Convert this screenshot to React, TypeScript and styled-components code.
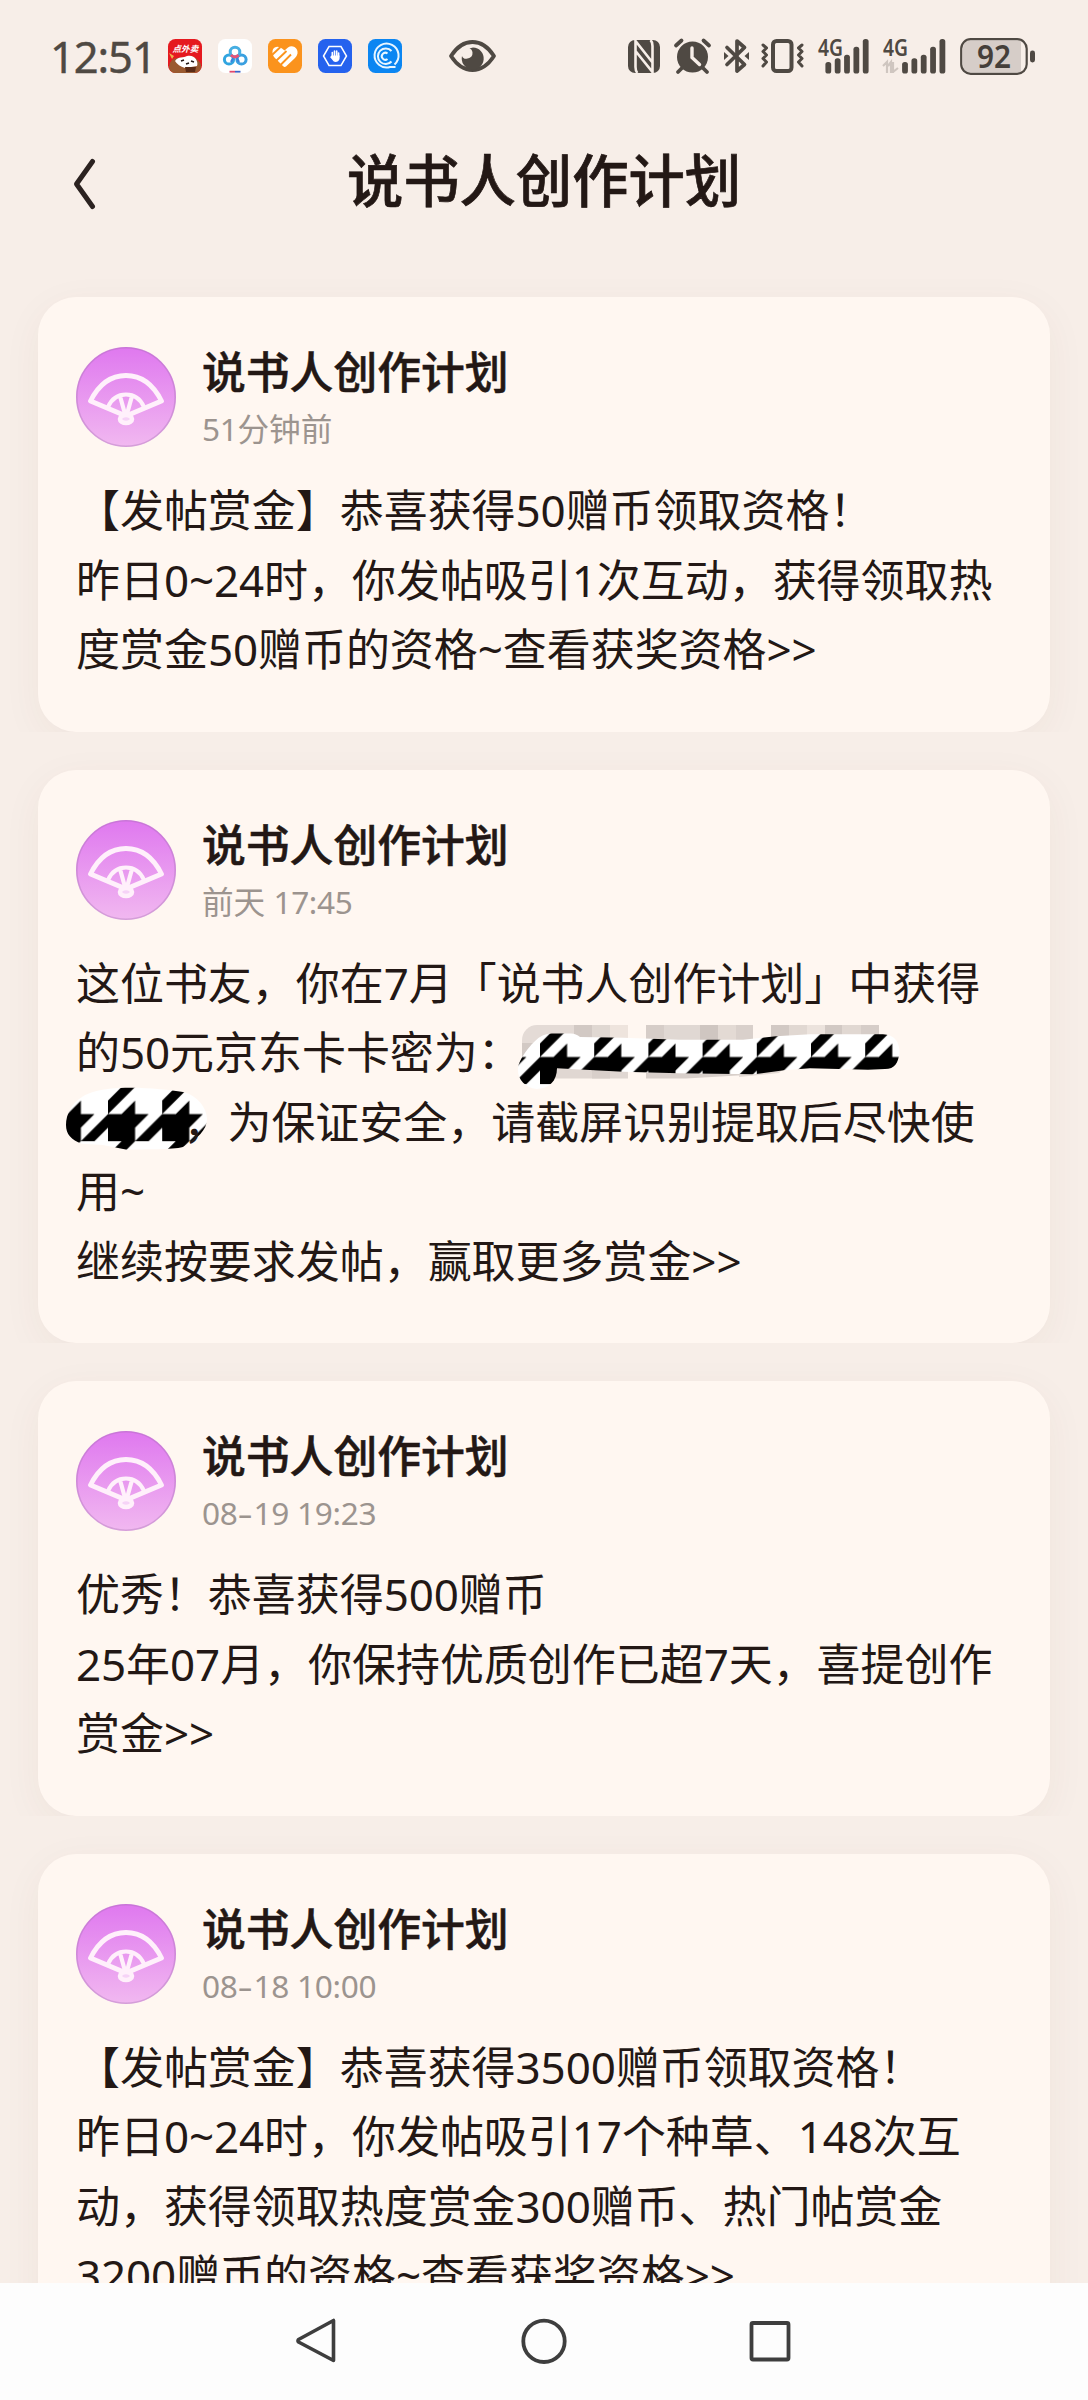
import React from "react";
import styled, { createGlobalStyle } from "styled-components";

const Global = createGlobalStyle`
  * { box-sizing: border-box; }
  body { margin: 0; background: #f7eee8; }
`;

const INK = "#4f4943";

const Screen = styled.div`
  width: 1088px;
  height: 2400px;
  display: flex;
  flex-direction: column;
  overflow: hidden;
  background: #f7eee8;
  color: #231815;
  font-family: "Noto Sans", "Noto Sans CJK SC", sans-serif;
`;

const StatusBar = styled.header`
  height: 112px;
  flex: none;
  display: flex;
  align-items: center;
  padding: 0 53px 0 50px;
`;

const Clock = styled.span`
  width: 118px;
  color: ${INK};
  font: 400 43.5px/50px "Noto Sans", sans-serif;
  letter-spacing: -1.1px;
  white-space: nowrap;
  -webkit-text-stroke: 0.4px ${INK};
`;

const AppIcons = styled.div`
  display: flex;
  gap: 16px;
  width: 281px;
`;

const SystemIcons = styled.div`
  display: flex;
  align-items: center;
  margin-left: auto;
`;

const Glyph = styled.svg<{ $gap?: number }>`
  display: block;
  flex: none;
  overflow: visible;
  margin-left: ${(p) => p.$gap ?? 0}px;
`;

const TitleBar = styled.div`
  height: 147px;
  flex: none;
  display: grid;
  grid-template-columns: 120px 1fr 120px;
  align-items: start;
`;

const BackButton = styled.button`
  border: 0;
  background: none;
  padding: 46px 0 0 72px;
`;

const PageTitle = styled.h1`
  margin: 0;
  padding-top: 25.5px;
  text-align: center;
  font-size: 56.3px;
  line-height: 84px;
  font-weight: 500;
  -webkit-text-stroke: 0.7px #231815;
`;

const Feed = styled.main`
  height: 2024px;
  flex: none;
  overflow: hidden;
`;

const FeedItem = styled.div`
  padding: 38px 38px 0;
  overflow: hidden;
`;

const Card = styled.article`
  isolation: isolate;
  padding: 50px 38px 47px;
  border-radius: 38px;
  background: #fff7f1;
  box-shadow: 0 10px 40px rgba(90, 50, 40, 0.05);
`;

const CardHead = styled.div`
  display: flex;
  gap: 26px;
  height: 100px;
`;

const Author = styled.div`
  display: flex;
  flex-direction: column;
`;

const Name = styled.div`
  margin-top: -1px;
  font-size: 43.8px;
  line-height: 52px;
  font-weight: 500;
  -webkit-text-stroke: 0.5px #231815;
`;

const Time = styled.div`
  margin-top: 7px;
  font-size: 31.6px;
  line-height: 48px;
  color: #9c948f;
`;

const Body = styled.div`
  margin-top: 29px;
  font-size: 43.96px;
  line-height: 69.5px;
`;

const Line = styled.div`
  white-space: nowrap;
`;

const Latin = styled.span<{ $track: number }>`
  letter-spacing: ${(p) => p.$track}px;
`;

const Dash = styled.span`
  display: inline-block;
  margin: 0 2.9px;
  transform: scaleX(1.5);
`;

const Redacted = styled.span<{ $width: number }>`
  position: relative;
  display: inline-block;
  width: ${(p) => p.$width}px;
  height: 30px;
`;

const Scribble = styled.svg<{ $left: number; $top: number }>`
  position: absolute;
  z-index: -1;
  left: ${(p) => p.$left}px;
  top: ${(p) => p.$top}px;
  overflow: visible;
`;

const NavBar = styled.nav`
  height: 117px;
  flex: none;
  display: flex;
  justify-content: center;
  align-items: flex-start;
  gap: 180px;
  padding: 34px 0 0;
  background: #fdfdfd;
`;

function Text({ children, track = -0.1 }: { children: string; track?: number }) {
  return (
    <>
      {children.split(/([0-9~>:]+|-)/).map((part, i) => {
        if (part === "-") return <Dash key={i}>-</Dash>;
        return i % 2 ? <Latin key={i} $track={track}>{part}</Latin> : part;
      })}
    </>
  );
}

function Avatar() {
  return (
    <Glyph width="100" height="100" viewBox="0 0 100 100">
      <defs>
        <linearGradient id="avatarFill" x1="0" y1="0" x2="0" y2="1">
          <stop offset="0" stopColor="#df78ef" />
          <stop offset="1" stopColor="#f1b8f0" />
        </linearGradient>
      </defs>
      <circle cx="50" cy="50" r="50" fill="url(#avatarFill)" />
      <circle cx="50" cy="50" r="49.2" fill="none" stroke="#a06fb0" strokeOpacity=".35" strokeWidth="1.6" />
      <g fill="none" stroke="#fff0fb" strokeWidth="4.8" strokeLinejoin="round">
        <path d="M14.5 54C23 37 35 28.500 50 28.500S77 37 85.500 54L50 69Z" />
        <path d="M32 60C36 51 42 47.500 50 47.500S64 51 68 60M44 49L49 67M56 49L51 67" strokeWidth="4.2" />
        <ellipse cx="50" cy="72" rx="6" ry="4" fill="#f6d3f7" strokeWidth="4.6" />
      </g>
    </Glyph>
  );
}

function HoundsPattern({ id, x, y }: { id: string; x: number; y: number }) {
  return (
    <pattern id={id} x={x} y={y} width="54.2" height="54.2" patternUnits="userSpaceOnUse" viewBox="0 0 4 4">
      <rect width="4" height="4" fill="#fff" />
      <path d="M0 1L1 0H2L0 2ZM2 1V2H1ZM0 2H2V4H0ZM2 2H3L2 3ZM4 2V3L3 4H2Z" fill="#000" />
    </pattern>
  );
}

const mosaic: [number, number, string][] = [
  [523, 52, "#e4dbd6"], [575, 18, "#d2c9c4"], [593, 18, "#e0d8d2"], [611, 18, "#eee4dd"],
  [647, 18, "#d6cdc8"], [665, 36, "#e0d8d3"], [701, 18, "#cfc6c1"], [719, 18, "#e3dad4"],
  [737, 17, "#d9d0cb"], [772, 18, "#d2c9c4"], [790, 18, "#e1d8d2"], [808, 18, "#ece3dd"],
  [826, 17, "#d2c9c4"], [843, 19, "#e1d8d2"], [862, 18, "#d6cdc8"],
];

function CodeScribble() {
  return (
    <Redacted $width={390}>
      <Scribble $left={-9} $top={-18.5} width="390" height="70" viewBox="514 1020 390 70">
        <defs>
          <HoundsPattern id="houndsA" x={541} y={1028.9} />
          <clipPath id="mosaicClip"><rect x="523" y="1024" width="380" height="54" rx="15" /></clipPath>
        </defs>
        <g clipPath="url(#mosaicClip)">
          {mosaic.map(([x, w, c]) => <rect key={x} x={x} y="1024" width={w} height="24" fill={c} />)}
          <path d="M523 1042h22v22h-22z" fill="#d2c9c4" />
          <path d="M556 1060h73v17.500h-73z" fill="#e0d7d2" />
          <path d="M593 1060h18v17.500h-18z" fill="#d8cfca" />
          <path d="M647 1060h110l-10 14-60 3.500h-40z" fill="#d8cfca" />
          <path d="M740 1060h52l-12 12-40 4z" fill="#e3dad4" />
        </g>
        <path
          fill="url(#houndsA)"
          d="M519 1067C520 1058 533 1041 541 1036Q546 1032.500 553 1032.500H572Q577 1032.500 581 1036L624 1036.700 680 1038.700H744L777 1035.300 811 1033.300H884Q900.500 1034 900.500 1052C899 1062 896 1068 886 1068L869 1068.700 811 1067.300 785 1069.300 755 1073.300 680 1072.300 624 1070.700 558 1067.300C558 1080 550 1088 537.500 1088C526 1087 518 1078 519 1067Z"
        />
      </Scribble>
    </Redacted>
  );
}

function TailScribble() {
  return (
    <Redacted $width={107.5}>
      <Scribble $left={-12} $top={-23} width="145" height="66" viewBox="64 1084 145 66">
        <defs>
          <HoundsPattern id="houndsB" x={108} y={1085} />
        </defs>
        <path
          fill="url(#houndsB)"
          d="M66 1123C66 1112 72 1101 82 1095Q94 1087 120 1086C145 1085 168 1088 183 1090C197 1093 207 1106 207 1117C207 1128 197 1137 183 1145C172 1148 145 1147 127 1147.700L103 1143 82 1141.700C71 1138 66 1132 66 1123Z"
        />
      </Scribble>
    </Redacted>
  );
}

function Message({ time, children }: { time: string; children: React.ReactNode }) {
  return (
    <FeedItem>
      <Card>
        <CardHead>
          <Avatar />
          <Author>
            <Name>说书人创作计划</Name>
            <Time><Text track={-0.35}>{time}</Text></Time>
          </Author>
        </CardHead>
        <Body>{children}</Body>
      </Card>
    </FeedItem>
  );
}

function Lines({ items }: { items: string[] }) {
  return <>{items.map((t) => <Line key={t}><Text>{t}</Text></Line>)}</>;
}

function AppTile({ children, fill }: { children: React.ReactNode; fill: string }) {
  return (
    <Glyph width="34" height="34" viewBox="0 0 34 34">
      <rect width="34" height="34" rx="7.500" fill={fill} />
      {children}
    </Glyph>
  );
}

function NotificationApps() {
  return (
    <AppIcons>
      <AppTile fill="#e5191f">
        <path d="M1 28Q2 19 10 19L24 17Q33 22 33 27Q33 34 26 34H8Q2 34 1 28Z" fill="#9a5a30" />
        <path d="M7 22C10 17 16 19 19 17C26 15 31 22 29 27L17 29Q10 27 7 22Z" fill="#fff" />
        <path d="M17 28h11l-1 5h-9z" fill="#5a2b16" />
        <path d="M1 14l5 3-2 3z" fill="#efb14a" />
        <path d="M13 22l3-1M23 22l3 1M18 25l3-1" stroke="#231815" strokeWidth="1.600" />
        <text x="4.500" y="12.800" fontSize="8.600" fontWeight="700" fill="#fff" fontStyle="italic" fontFamily="Noto Sans CJK SC, sans-serif">点外卖</text>
      </AppTile>
      <AppTile fill="#fff">
        <g fill="none" strokeWidth="3">
          <circle cx="11" cy="20.500" r="4.600" stroke="#31a5e0" />
          <circle cx="23.500" cy="20.500" r="4.600" stroke="#3aa0e0" />
          <circle cx="17" cy="13" r="4.800" stroke="#46aee2" />
          <path d="M13 16Q17 20 20.500 16" stroke="#ea5277" />
          <path d="M15 19l-2 4M19 19l2 4" stroke="#3a83dc" strokeWidth="2" />
        </g>
        <path d="M11.500 32.700h5.500" stroke="#e0486c" strokeWidth="1.800" />
        <path d="M17 32.700h5.500" stroke="#3a62c8" strokeWidth="1.800" />
      </AppTile>
      <AppTile fill="#fb931d">
        <path d="M4.500 14Q4 9 8 8Q11 7 14 9.500L16.500 11.500L20 8.500Q23 6.500 26.500 8Q30 10 29.500 14.500Q29 17 27 19L18 27.500Q16.500 28.500 15 27L6 18Q4.800 16.500 4.500 14Z" fill="#fff" />
        <path d="M4 16L12.500 8M8.500 21.500L18.500 12M12.500 26L23 15.500" stroke="#fb931d" strokeWidth="1.900" />
      </AppTile>
      <AppTile fill="#2562ee">
        <path d="M11 7.500h12l5.500 9.500-5.500 9.500H11L5.500 17z" fill="none" stroke="#fff" strokeWidth="1.500" />
        <path d="M14.300 18v-4.500M16.500 17v-5M18.700 17v-5M20.600 18v-4" stroke="#fff" strokeWidth="1.600" strokeLinecap="round" />
        <path d="M13.500 16.500h8V20q-1 3-4 3-2 0-3-2l-2.500-3 1-.7z" fill="#fff" />
      </AppTile>
      <AppTile fill="#0b86f2">
        <g fill="none" stroke="#e9f6ff" strokeWidth="2">
          <path d="M26.500 25.500A12 12 0 1 0 22 28L27.500 28" />
          <path d="M23.500 12A7.800 7.800 0 1 0 23.500 22.500" />
          <path d="M19.500 14.500A3.500 3.500 0 1 0 19.500 20" />
        </g>
      </AppTile>
    </AppIcons>
  );
}

function Signal({ data }: { data?: boolean }) {
  const x0 = data ? 22 : 10.3;
  const tops = [23, 19.300, 15.700, 7.700, 0];
  return (
    <Glyph $gap={14} width={data ? 63 : 51} height="34" viewBox={data ? "0 0 63 34" : "0 0 51 34"}>
      <text x="0" y="16.500" fontFamily="Noto Sans, sans-serif" fontWeight="600" fontSize="22.500" textLength="25" lengthAdjust="spacingAndGlyphs" fill={INK}>4G</text>
      {tops.map((t, i) => (
        <rect key={i} x={x0 - 2.900 + i * 9.350} y={t} width="5.800" height={34.500 - t} rx="2.600" fill={INK} />
      ))}
      {data && <path d="M0 27l4-4v11M5 27l3-4v11M10 34V23M10 33l5-4M10 24v6" fill="none" stroke="#cfc6c0" strokeWidth="2.200" />}
    </Glyph>
  );
}

function SystemTray() {
  return (
    <SystemIcons>
      <Glyph width="32" height="33" viewBox="0 0 32 33">
        <rect width="32" height="33" rx="7" fill={INK} />
        <path d="M9.300 33Q7.500 31 7.500 27V1L24.500 22.500M7.500 11L24.500 32V6Q24.500 2 22.500 0" fill="none" stroke="#f7eee8" strokeWidth="2.600" />
      </Glyph>
      <Glyph $gap={14} width="37" height="34" viewBox="0 0 37 34">
        <circle cx="18.500" cy="18" r="15.500" fill={INK} />
        <path d="M2 6.500L7.500 1.500M35 6.500L29.500 1.500M8 29l-4 4M29 29l4 4" stroke={INK} strokeWidth="3.800" strokeLinecap="round" />
        <path d="M18 9v9.500l7.500 7" fill="none" stroke="#f7eee8" strokeWidth="3.400" strokeLinecap="round" />
      </Glyph>
      <Glyph $gap={13} width="25" height="34" viewBox="0 0 25 34">
        <path d="M3 8.500L20.500 25.500L13 32V2l7.500 6.500L3 25.500" fill="none" stroke={INK} strokeWidth="3.700" strokeLinecap="round" strokeLinejoin="round" />
        <path d="M0 13v8l4.500-4zM25 13v8l-4.500-4z" fill={INK} />
      </Glyph>
      <Glyph $gap={12} width="43" height="34" viewBox="0 0 43 34">
        <rect x="12" y="2" width="18.500" height="30" rx="3.500" fill="none" stroke={INK} strokeWidth="4" />
        <path d="M2 6l3.500 3-3.500 3.500 3.500 3.500-3.500 3.500 3.500 3.500-3.500 4M41 6l-3.500 3 3.500 3.500-3.500 3.500 3.500 3.500-3.500 3.500 3.500 4" fill="none" stroke={INK} strokeWidth="3" strokeLinejoin="round" strokeLinecap="round" />
      </Glyph>
      <Signal />
      <Signal data />
      <Glyph $gap={14} width="75" height="37" viewBox="0 0 75 37">
        <path d="M11 2.500H61V34.500H11Q3 34.500 3 26.500V10.500Q3 2.500 11 2.500Z" fill="#d6cdc8" />
        <rect x="1.200" y="1.200" width="65.500" height="34.600" rx="9.500" fill="none" stroke={INK} strokeWidth="2.200" />
        <rect x="70" y="12.500" width="5" height="12" rx="2.400" fill={INK} />
        <text x="17" y="30.300" textLength="34" lengthAdjust="spacingAndGlyphs" fontFamily="Noto Sans, sans-serif" fontWeight="600" fontSize="32.500" fill="#453f3a">92</text>
      </Glyph>
    </SystemIcons>
  );
}

export default function App() {
  return (
    <Screen>
      <Global />
      <StatusBar>
        <Clock>12:51</Clock>
        <NotificationApps />
        <Glyph width="47" height="32" viewBox="0 0 47 32">
          <path d="M2 16Q11 2 23.500 2T45 16Q36 30 23.500 30T2 16Z" fill="none" stroke={INK} strokeWidth="3.800" strokeLinejoin="round" />
          <path d="M24 7.500A11 11 0 1 1 13 16Q14 19 17.500 18.800Q24 18 23.500 12.500Q23 9 20.500 8.500Z" fill={INK} />
        </Glyph>
        <SystemTray />
      </StatusBar>
      <TitleBar>
        <BackButton aria-label="返回">
          <Glyph width="24" height="52" viewBox="0 0 24 52">
            <path d="M20.500 3.500L4.500 26l16 22.500" fill="none" stroke="#2b2220" strokeWidth="5" strokeLinecap="round" strokeLinejoin="round" />
          </Glyph>
        </BackButton>
        <PageTitle>说书人创作计划</PageTitle>
      </TitleBar>
      <Feed>
        <Message time="51分钟前">
          <Lines items={["【发帖赏金】恭喜获得50赠币领取资格！", "昨日0~24时，你发帖吸引1次互动，获得领取热", "度赏金50赠币的资格~查看获奖资格>>"]} />
        </Message>
        <Message time="前天 17:45">
          <Lines items={["这位书友，你在7月「说书人创作计划」中获得"]} />
          <Line><Text>的50元京东卡卡密为：</Text><CodeScribble /></Line>
          <Line><TailScribble />，为保证安全，请截屏识别提取后尽快使</Line>
          <Lines items={["用~", "继续按要求发帖，赢取更多赏金>>"]} />
        </Message>
        <Message time="08-19 19:23">
          <Lines items={["优秀！恭喜获得500赠币", "25年07月，你保持优质创作已超7天，喜提创作", "赏金>>"]} />
        </Message>
        <Message time="08-18 10:00">
          <Lines items={["【发帖赏金】恭喜获得3500赠币领取资格！", "昨日0~24时，你发帖吸引17个种草、148次互", "动，获得领取热度赏金300赠币、热门帖赏金", "3200赠币的资格~查看获奖资格>>"]} />
        </Message>
      </Feed>
      <NavBar>
        <Glyph width="46" height="48" viewBox="0 0 46 48">
          <path d="M38.500 3.500V43.500L3.500 25Q2.500 24 3.500 22.500Z" fill="none" stroke="#3e3e3e" strokeWidth="3.600" strokeLinejoin="round" />
        </Glyph>
        <Glyph width="46" height="48" viewBox="0 0 46 48">
          <circle cx="23" cy="24.300" r="20.700" fill="none" stroke="#3e3e3e" strokeWidth="3.800" />
        </Glyph>
        <Glyph width="46" height="48" viewBox="0 0 46 48">
          <rect x="4.500" y="6" width="37" height="36.500" rx="1.500" fill="none" stroke="#3e3e3e" strokeWidth="3.800" />
        </Glyph>
      </NavBar>
    </Screen>
  );
}
